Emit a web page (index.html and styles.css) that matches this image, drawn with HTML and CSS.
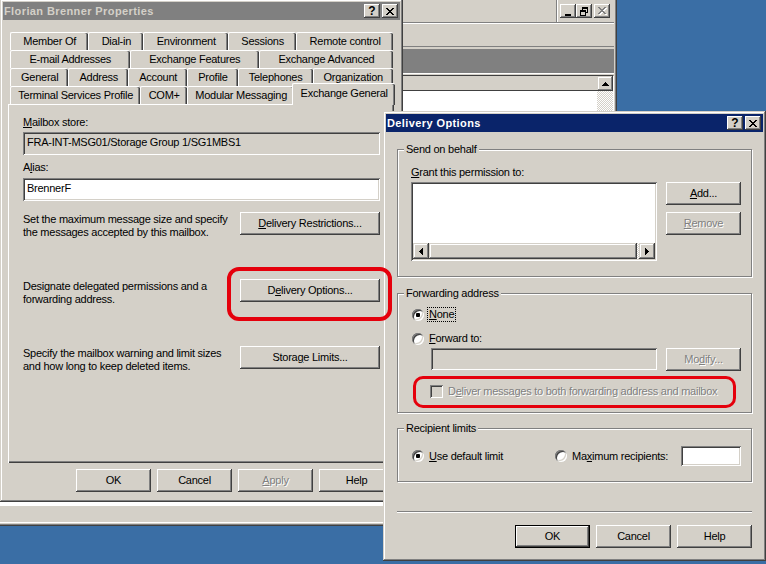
FILE: index.html
```html
<!DOCTYPE html>
<html lang="en">
<head>
    <meta charset="UTF-8">
    <meta name="viewport" content="width=device-width, initial-scale=1.0">
    <title>Florian Brenner Properties - Delivery Options</title>
    <link rel="stylesheet" href="styles.css">
</head>
<body>
<div class="desktop">

    <!-- console window behind the dialogs -->
    <div class="window console">
        <div class="menubar">
            <span class="etched-v"></span>
            <span class="cap-btn"><svg width="8" height="9" viewBox="0 0 8 9"><path d="M1 7h6v2H1z"/></svg></span>
            <span class="cap-btn"><svg width="8" height="9" viewBox="0 0 8 9"><path d="M2 0h6v2H2zM2 2h1v1H2zM7 2h1v4H7zM6 5h1v1H6zM0 3h6v2H0zM0 5h1v4H0zM5 5h1v4H5zM0 8h6v1H0z"/></svg></span>
            <span class="cap-btn close disabled"><svg width="9" height="8" viewBox="0 0 9 8"><path fill="#fff" transform="translate(1 1)" d="M0 0h2v1H0zM6 0h2v1H6zM1 1h2v1H1zM5 1h2v1H5zM2 2h4v1H2zM3 3h2v1H3zM2 4h4v1H2zM1 5h2v1H1zM5 5h2v1H5zM0 6h2v1H0zM6 6h2v1H6z"/><path fill="#808080" d="M0 0h2v1H0zM6 0h2v1H6zM1 1h2v1H1zM5 1h2v1H5zM2 2h4v1H2zM3 3h2v1H3zM2 4h4v1H2zM1 5h2v1H1zM5 5h2v1H5zM0 6h2v1H0zM6 6h2v1H6z"/></svg></span>
        </div>
        <div class="toolbar"></div>
        <div class="console-band"></div>
        <div class="console-pane">
            <div class="pane-list">
                <div class="pane-header"></div>
            </div>
            <div class="vscroll">
                <span class="scroll-btn"><svg width="7" height="4" viewBox="0 0 7 4"><path d="M3 0h1v1H3zM2 1h3v1H2zM1 2h5v1H1zM0 3h7v1H0z"/></svg></span>
            </div>
        </div>
        <div class="statusbar"></div>
    </div>

    <!-- user properties sheet -->
    <div class="window props">
        <div class="titlebar inactive">
            <span class="title">Florian Brenner Properties</span>
            <span class="cap-btn help">?</span>
            <span class="cap-btn close"><svg width="8" height="7" viewBox="0 0 8 7"><path d="M0 0h2v1H0zM6 0h2v1H6zM1 1h2v1H1zM5 1h2v1H5zM2 2h4v1H2zM3 3h2v1H3zM2 4h4v1H2zM1 5h2v1H1zM5 5h2v1H5zM0 6h2v1H0zM6 6h2v1H6z"/></svg></span>
        </div>
        <div class="props-body">
            <div class="tabstrip">
                <div class="tab-row">
                    <span class="tab">Member Of</span>
                    <span class="tab">Dial-in</span>
                    <span class="tab">Environment</span>
                    <span class="tab">Sessions</span>
                    <span class="tab">Remote control</span>
                </div>
                <div class="tab-row">
                    <span class="tab">E-mail Addresses</span>
                    <span class="tab">Exchange Features</span>
                    <span class="tab">Exchange Advanced</span>
                </div>
                <div class="tab-row">
                    <span class="tab">General</span>
                    <span class="tab">Address</span>
                    <span class="tab">Account</span>
                    <span class="tab">Profile</span>
                    <span class="tab">Telephones</span>
                    <span class="tab">Organization</span>
                </div>
                <div class="tab-row">
                    <span class="tab">Terminal Services Profile</span>
                    <span class="tab">COM+</span>
                    <span class="tab">Modular Messaging</span>
                    <span class="tab active">Exchange General</span>
                </div>
            </div>

            <div class="tab-page">
                <div class="field-label"><u>M</u>ailbox store:</div>
                <div class="edit readonly">FRA-INT-MSG01/Storage Group 1/SG1MBS1</div>
                <div class="field-label alias">A<u>l</u>ias:</div>
                <div class="edit alias-edit">BrennerF</div>

                <div class="opt-list">
                    <div class="opt-row">
                        <p>Set the maximum message size and specify<br>the messages accepted by this mailbox.</p>
                        <button class="btn wide"><u>D</u>elivery Restrictions...</button>
                    </div>
                    <div class="opt-row">
                        <p>Designate delegated permissions and a<br>forwarding address.</p>
                        <button class="btn wide">D<u>e</u>livery Options...</button>
                    </div>
                    <div class="opt-row">
                        <p>Specify the mailbox warning and limit sizes<br>and how long to keep deleted items.</p>
                        <button class="btn wide">Stora<u>g</u>e Limits...</button>
                    </div>
                </div>
            </div>

            <div class="dlg-buttons">
                <button class="btn">OK</button>
                <button class="btn">Cancel</button>
                <button class="btn disabled"><u>A</u>pply</button>
                <button class="btn">Help</button>
            </div>
        </div>
    </div>

    <!-- delivery options dialog -->
    <div class="window delivery">
        <div class="titlebar">
            <span class="title">Delivery Options</span>
            <span class="cap-btn help">?</span>
            <span class="cap-btn close"><svg width="8" height="7" viewBox="0 0 8 7"><path d="M0 0h2v1H0zM6 0h2v1H6zM1 1h2v1H1zM5 1h2v1H5zM2 2h4v1H2zM3 3h2v1H3zM2 4h4v1H2zM1 5h2v1H1zM5 5h2v1H5zM0 6h2v1H0zM6 6h2v1H6z"/></svg></span>
        </div>
        <div class="delivery-body">
            <fieldset class="group">
                <legend>Send on behalf</legend>
                <div class="group-inner behalf">
                    <div class="field-label"><u>G</u>rant this permission to:</div>
                    <div class="pick-row">
                        <div class="listbox">
                            <div class="hscroll">
                                <span class="scroll-btn"><svg width="4" height="7" viewBox="0 0 4 7"><path d="M0 3h1v1H0zM1 2h1v3H1zM2 1h1v5H2zM3 0h1v7H3z"/></svg></span>
                                <span class="scroll-thumb"></span>
                                <span class="scroll-btn"><svg width="4" height="7" viewBox="0 0 4 7"><path d="M3 3h1v1H3zM2 2h1v3H2zM1 1h1v5H1zM0 0h1v7H0z"/></svg></span>
                            </div>
                        </div>
                        <div class="side-buttons">
                            <button class="btn"><u>A</u>dd...</button>
                            <button class="btn disabled"><u>R</u>emove</button>
                        </div>
                    </div>
                </div>
            </fieldset>

            <fieldset class="group forwarding">
                <legend>Forwarding address</legend>
                <div class="group-inner">
                    <div class="choice">
                        <span class="radio checked"></span>
                        <span class="focus"><u>N</u>one</span>
                    </div>
                    <div class="choice second">
                        <span class="radio"></span>
                        <span><u>F</u>orward to:</span>
                    </div>
                    <div class="pick-row forward-row">
                        <div class="edit disabled-edit"></div>
                        <button class="btn disabled">Mo<u>d</u>ify...</button>
                    </div>
                    <div class="choice check-row">
                        <span class="checkbox"></span>
                        <span class="disabled">D<u>e</u>liver messages to both forwarding address and mailbox</span>
                    </div>
                </div>
            </fieldset>

            <fieldset class="group limits">
                <legend>Recipient limits</legend>
                <div class="group-inner limits-row">
                    <div class="choice">
                        <span class="radio checked"></span>
                        <span><u>U</u>se default limit</span>
                    </div>
                    <div class="choice">
                        <span class="radio"></span>
                        <span>Ma<u>x</u>imum recipients:</span>
                    </div>
                    <div class="edit small-edit"></div>
                </div>
            </fieldset>

            <div class="separator"></div>

            <div class="dlg-buttons">
                <button class="btn default">OK</button>
                <button class="btn">Cancel</button>
                <button class="btn">Help</button>
            </div>
        </div>
    </div>

    <!-- red markers drawn over the screenshot -->
    <div class="callout callout-options"></div>
    <div class="callout callout-deliver"></div>
</div>
</body>
</html>
```

FILE: styles.css
```css
* {
    box-sizing: border-box;
}

body {
    margin: 0;
    background: #3a6ea5;
    font-family: "Liberation Sans", Arial, sans-serif;
    font-size: 11px;
    line-height: 13px;
    letter-spacing: -0.25px;
    color: #000;
}

.desktop {
    position: relative;
    width: 766px;
    height: 564px;
    overflow: hidden;
}

u {
    text-decoration: underline;
    text-underline-offset: 1px;
}

/* classic raised window frame */
.window {
    position: absolute;
    display: flex;
    flex-direction: column;
    padding: 3px;
    background: #d4d0c8;
    box-shadow: inset -1px -1px #404040, inset 1px 1px #d4d0c8, inset -2px -2px #808080, inset 2px 2px #fff;
}
.console {
    left: -3px;
    top: -3px;
    width: 620px;
    height: 529px;
}
.props {
    left: 0;
    top: -1px;
    width: 403px;
    height: 503px;
}
.delivery {
    left: 383px;
    top: 111px;
    width: 383px;
    height: 450px;
}

.titlebar {
    display: flex;
    align-items: center;
    flex: none;
    height: 18px;
    padding: 0 2px 0 1px;
    background: #0a246a;
    color: #fff;
    font-weight: bold;
    letter-spacing: 0.4px;
}
.titlebar.inactive {
    background: #808080;
    color: #d4d0c8;
}
.titlebar .title {
    flex: 1;
    white-space: nowrap;
}

.cap-btn {
    display: flex;
    align-items: center;
    justify-content: center;
    flex: none;
    width: 16px;
    height: 14px;
    background: #d4d0c8;
    color: #000;
    box-shadow: inset -1px -1px #404040, inset 1px 1px #fff, inset -2px -2px #808080, inset 2px 2px #d4d0c8;
}
.cap-btn.help {
    font-size: 12px;
    letter-spacing: 0;
    padding-top: 1px;
}
.cap-btn.close {
    margin-left: 2px;
}

/* --- console --- */
.menubar {
    display: flex;
    align-items: center;
    justify-content: flex-end;
    height: 23px;
    padding-right: 4px;
    border-bottom: 1px solid #808080;
}
.etched-v {
    align-self: stretch;
    width: 2px;
    margin-right: 2px;
    border-left: 1px solid #808080;
    border-right: 1px solid #fff;
}
.toolbar {
    height: 24px;
    border-top: 1px solid #fff;
    border-bottom: 1px solid #808080;
}
.console-band {
    height: 25px;
    margin-top: 2px;
    background: #808080;
    border-bottom: 1px solid #fff;
}
.console-pane {
    flex: 1;
    display: flex;
    margin-top: 1px;
    background: #fff;
    border-top: 1px solid #404040;
    border-right: 1px solid #fff;
    border-bottom: 1px solid #fff;
}
.pane-list {
    flex: 1;
}
.pane-header {
    height: 15px;
    background: #d4d0c8;
    border-bottom: 1px solid #404040;
}
.vscroll {
    width: 16px;
    background: repeating-conic-gradient(#fff 0 25%, #d4d0c8 0 50%) 0 0 / 2px 2px;
}
.vscroll .scroll-btn {
    height: 15px;
}
.statusbar {
    height: 17px;
    box-shadow: inset 0 -1px #fff;
}

/* --- scroll bars --- */
.scroll-btn {
    display: flex;
    align-items: center;
    justify-content: center;
    flex: none;
    width: 16px;
    height: 16px;
    background: #d4d0c8;
    box-shadow: inset -1px -1px #404040, inset 1px 1px #d4d0c8, inset -2px -2px #808080, inset 2px 2px #fff;
}
.scroll-thumb {
    flex: 1;
    margin-right: 2px;
    background: #d4d0c8;
    box-shadow: inset -1px -1px #404040, inset 1px 1px #d4d0c8, inset -2px -2px #808080, inset 2px 2px #fff;
}

/* --- properties sheet --- */
.props-body {
    flex: 1;
    padding: 12px 6px 0 5px;
}
.tabstrip {
    margin: 0 1px 0 2px;
}
.tab-row {
    display: flex;
    height: 18px;
}
.tab {
    flex: auto;
    padding: 2px 4px 0;
    text-align: center;
    white-space: nowrap;
    background: #d4d0c8;
    border-top: 1px solid #fff;
    border-left: 1px solid #fff;
    border-radius: 2px 2px 0 0;
    box-shadow: inset -1px 0 #404040, inset -2px 0 #808080;
}
.tab.active {
    position: relative;
    z-index: 1;
    height: 22px;
    margin: -3px -2px 0;
    padding-top: 3px;
}

.tab-page {
    height: 359px;
    padding: 11px 14px 0 14px;
    border-top: 1px solid #fff;
    border-left: 1px solid #fff;
    box-shadow: inset -1px -1px #404040, inset -2px -2px #808080;
}

.field-label {
    white-space: nowrap;
}
.field-label.alias {
    margin-top: 6px;
}

.edit {
    height: 23px;
    margin-top: 3px;
    padding: 4px 4px 0;
    background: #fff;
    white-space: nowrap;
    box-shadow: inset 1px 1px #808080, inset -1px -1px #fff, inset 2px 2px #404040, inset -2px -2px #d4d0c8;
}
.edit.readonly,
.edit.disabled-edit {
    background: #d4d0c8;
}
.edit.alias-edit {
    margin-top: 4px;
}

.opt-list {
    margin-top: 11px;
}
.opt-row {
    display: flex;
    justify-content: space-between;
    align-items: flex-start;
    height: 67px;
}
.opt-row p {
    margin: 1px 0 0;
    white-space: nowrap;
}

.btn {
    display: flex;
    align-items: center;
    justify-content: center;
    flex: none;
    width: 75px;
    height: 23px;
    padding: 0;
    border: 0;
    background: #d4d0c8;
    color: #000;
    font: inherit;
    letter-spacing: inherit;
    white-space: nowrap;
    box-shadow: inset -1px -1px #404040, inset 1px 1px #fff, inset -2px -2px #808080, inset 2px 2px #d4d0c8;
}
.btn.wide {
    width: 140px;
}
.btn.default {
    box-shadow: inset 0 0 0 1px #000, inset -2px -2px #404040, inset 2px 2px #fff, inset -3px -3px #808080;
}

.disabled {
    color: #808080;
    text-shadow: 1px 1px 0 #fff;
}

.dlg-buttons {
    display: flex;
    justify-content: flex-end;
    gap: 6px;
    margin-top: 6px;
}

/* --- delivery options --- */
.delivery-body {
    flex: 1;
    display: flex;
    flex-direction: column;
    padding: 11px 11px 0;
}

.group {
    margin: 0;
    padding: 0;
    min-width: 0;
    border: 1px solid #808080;
    box-shadow: inset 1px 1px #fff, 1px 1px #fff;
}
.group legend {
    margin-left: 6px;
    padding: 0 2px;
    background: #d4d0c8;
    line-height: 13px;
}
.group.forwarding {
    margin-top: 10px;
}
.group.limits {
    margin-top: 9px;
}

.group-inner {
    padding: 8px 10px 14px 13px;
}
.group-inner.behalf {
    padding-top: 10px;
    padding-bottom: 15px;
}

.pick-row {
    display: flex;
    align-items: flex-start;
    gap: 9px;
}
.listbox {
    display: flex;
    flex-direction: column;
    justify-content: flex-end;
    width: 246px;
    height: 79px;
    margin-top: 3px;
    padding: 2px;
    background: #fff;
    box-shadow: inset 1px 1px #808080, inset -1px -1px #fff, inset 2px 2px #404040, inset -2px -2px #d4d0c8;
}
.hscroll {
    display: flex;
    height: 16px;
    background: repeating-conic-gradient(#fff 0 25%, #d4d0c8 0 50%) 0 0 / 2px 2px;
}
.side-buttons {
    display: flex;
    flex-direction: column;
    gap: 7px;
    margin-top: 3px;
}

.choice {
    display: flex;
    align-items: center;
    height: 13px;
    white-space: nowrap;
}
.choice.second {
    margin-top: 11px;
}
.radio {
    flex: none;
    width: 12px;
    height: 12px;
    margin: 0 5px 0 1px;
    border-radius: 50%;
    background: #fff;
    box-shadow: inset 1px 1px #808080, inset -1px -1px #fff, inset 2px 2px #404040, inset -2px -2px #d4d0c8;
}
.radio.checked {
    background: radial-gradient(circle, #000 0 2px, #fff 2.5px);
}
.focus {
    padding: 0 1px;
    margin-left: -1px;
    outline: 1px dotted #000;
}

.forward-row {
    margin-top: 3px;
}
.forward-row .edit {
    width: 226px;
    height: 22px;
    margin: 0 0 0 20px;
}

.check-row {
    margin-top: 14px;
    padding-left: 19px;
}
.checkbox {
    flex: none;
    width: 13px;
    height: 13px;
    margin-right: 5px;
    background: #d4d0c8;
    box-shadow: inset 1px 1px #808080, inset -1px -1px #fff, inset 2px 2px #404040, inset -2px -2px #d4d0c8;
}

.limits-row {
    display: grid;
    grid-template-columns: 143px 1fr 60px;
    align-items: center;
    padding-top: 11px;
    padding-bottom: 15px;
}
.small-edit {
    height: 20px;
    margin: 0;
}

.separator {
    margin-top: 29px;
    border-top: 1px solid #808080;
    border-bottom: 1px solid #fff;
}
.delivery .dlg-buttons {
    margin-top: 12px;
}

/* red markers */
.callout {
    position: absolute;
    z-index: 5;
    border: 4px solid #e5000c;
    border-radius: 12px;
}
.callout-options {
    left: 227px;
    top: 267px;
    width: 165px;
    height: 54px;
}
.callout-deliver {
    left: 413px;
    top: 376px;
    width: 323px;
    height: 32px;
    border-width: 3px;
    border-radius: 10px;
}
```
